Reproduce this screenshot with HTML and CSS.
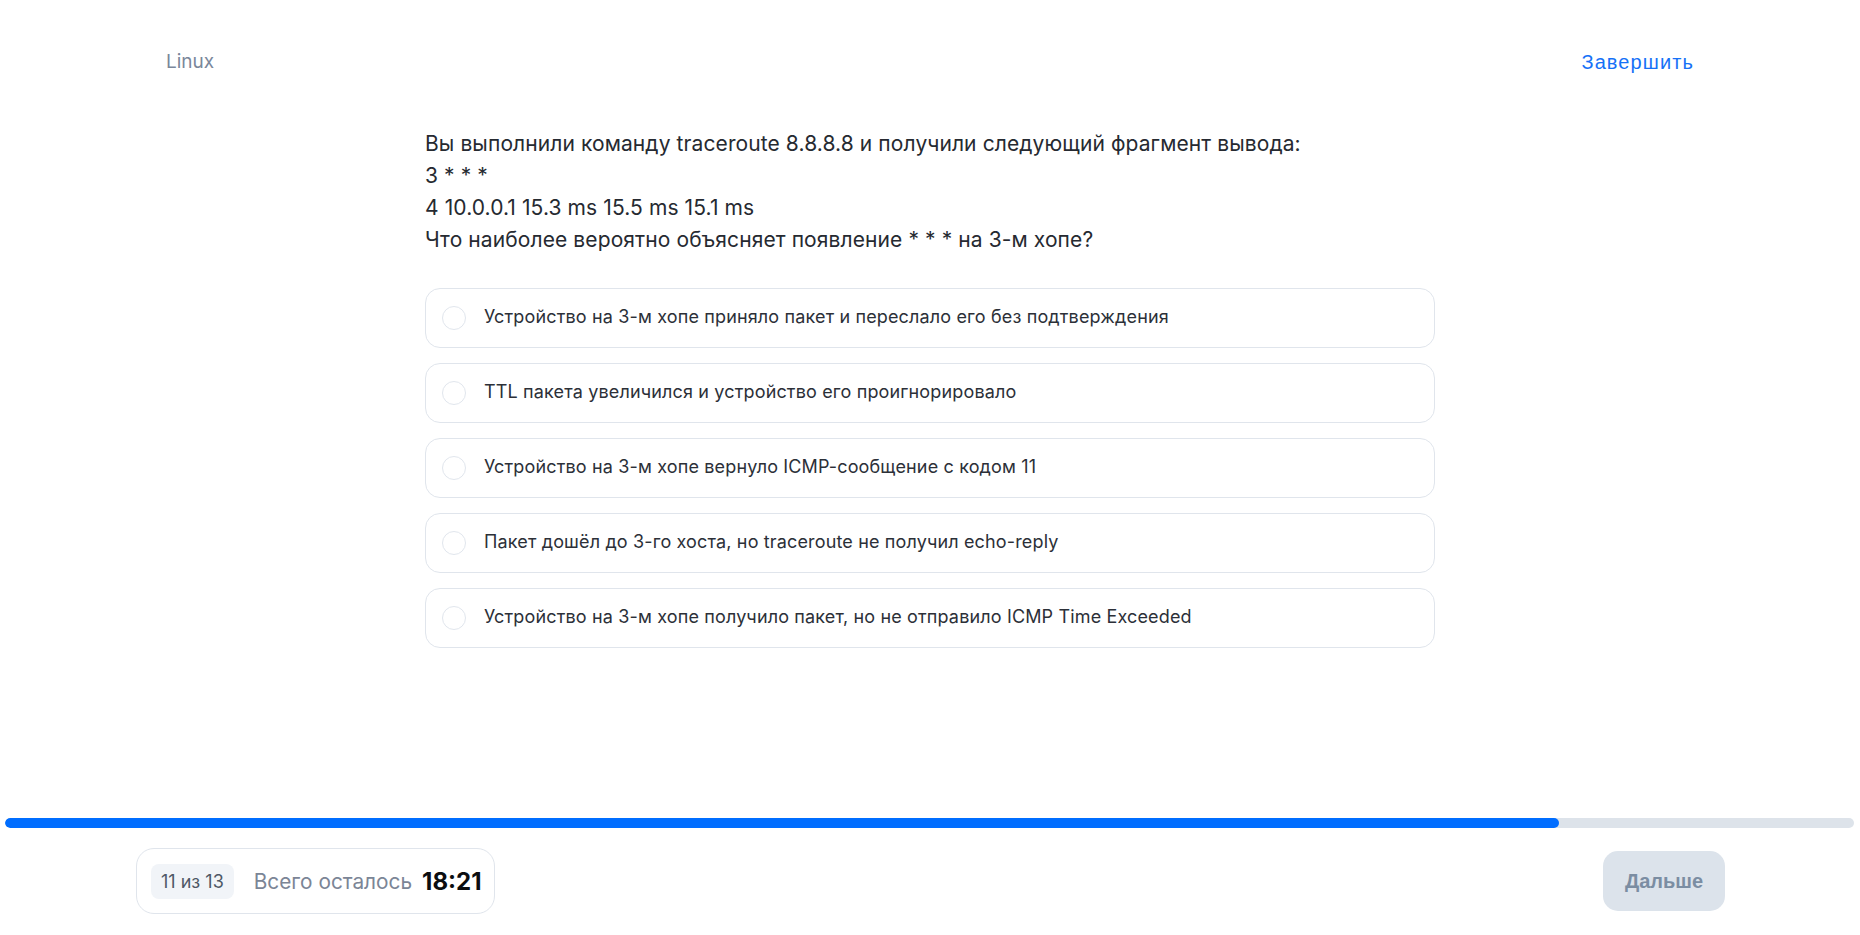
FILE: index.html
```html
<!DOCTYPE html>
<html lang="ru">
<head>
<meta charset="utf-8">
<title>Linux — тест</title>
<link rel="stylesheet" href="styles.css">
</head>
<body>
<div class="page">
  <header class="header">
    <span class="topic">Linux</span>
    <a class="finish" href="#">Завершить</a>
  </header>
  <main class="main">
    <div class="question">
      <p>Вы выполнили команду traceroute 8.8.8.8 и получили следующий фрагмент вывода:</p>
      <p>3 * * *</p>
      <p>4 10.0.0.1 15.3 ms 15.5 ms 15.1 ms</p>
      <p>Что наиболее вероятно объясняет появление * * * на 3-м хопе?</p>
    </div>
    <ul class="options">
      <li class="option"><span class="radio"></span><span class="label">Устройство на 3-м хопе приняло пакет и переслало его без подтверждения</span></li>
      <li class="option"><span class="radio"></span><span class="label">TTL пакета увеличился и устройство его проигнорировало</span></li>
      <li class="option"><span class="radio"></span><span class="label">Устройство на 3-м хопе вернуло ICMP-сообщение с кодом 11</span></li>
      <li class="option"><span class="radio"></span><span class="label">Пакет дошёл до 3-го хоста, но traceroute не получил echo-reply</span></li>
      <li class="option"><span class="radio"></span><span class="label">Устройство на 3-м хопе получило пакет, но не отправило ICMP Time Exceeded</span></li>
    </ul>
  </main>
  <footer class="footer">
    <div class="progress"><div class="progress-fill" style="width: 84.05%"></div></div>
    <div class="footer-row">
      <div class="status">
        <span class="counter">11 из 13</span>
        <span class="remaining">Всего осталось</span>
        <span class="timer">18:21</span>
      </div>
      <button class="next" type="button">Дальше</button>
    </div>
  </footer>
</div>
</body>
</html>
```

FILE: styles.css
```css
* { box-sizing: border-box; }

html, body {
  margin: 0;
  padding: 0;
  background: #ffffff;
}

body {
  font-family: Inter, "Noto Sans", sans-serif;
  color: #272b33;
}

.page {
  height: 100vh;
  display: flex;
  flex-direction: column;
}

.header {
  width: 1528px;
  margin: 0 auto;
  padding-top: 50px;
  display: flex;
  justify-content: space-between;
  align-items: center;
  line-height: 24px;
}

.topic {
  font-size: 19px;
  color: #7a879b;
}

.finish {
  font-family: "Liberation Sans", Arial, sans-serif;
  font-size: 20px;
  letter-spacing: 1.1px;
  color: #1671f7;
  text-decoration: none;
}

.main {
  flex: 1;
  width: 1010px;
  margin: 0 auto;
  padding-top: 54px;
}

.question p {
  margin: 0;
  font-size: 21px;
  letter-spacing: 0.1px;
  line-height: 32px;
  color: #262a31;
}

.options {
  list-style: none;
  margin: 32px 0 0;
  padding: 0;
  display: flex;
  flex-direction: column;
  gap: 15px;
}

.option {
  height: 60px;
  border: 1px solid #e0e5ec;
  border-radius: 15px;
  padding: 0 16px;
  display: flex;
  align-items: center;
  gap: 18px;
}

.radio {
  width: 24px;
  height: 24px;
  flex: none;
  border: 1.5px solid #e1e6ed;
  border-radius: 50%;
}

.label {
  font-size: 18px;
  letter-spacing: 0.15px;
  padding-bottom: 3px;
  color: #2c3038;
}

.footer {
  display: flex;
  flex-direction: column;
}

.progress {
  height: 10px;
  margin: 0 6px 0 5px;
  background: #dde3ea;
  border-radius: 5px;
  overflow: hidden;
}

.progress-fill {
  height: 100%;
  background: #006dff;
  border-radius: 5px;
}

.footer-row {
  display: flex;
  justify-content: space-between;
  align-items: center;
  padding: 20px 135px 21px 136px;
}

.status {
  height: 66px;
  border: 1px solid #e0e5ec;
  border-radius: 18px;
  padding: 0 12px 0 14px;
  display: flex;
  align-items: center;
}

.counter {
  height: 35px;
  padding: 0 10px;
  display: flex;
  align-items: center;
  background: #f1f4f8;
  border-radius: 8px;
  font-size: 18px;
  color: #4e5866;
}

.remaining {
  margin-left: 20px;
  font-size: 20.8px;
  color: #7b8596;
}

.timer {
  margin-left: 10px;
  font-size: 24px;
  font-weight: 700;
  color: #0b0d10;
}

.next {
  width: 122px;
  height: 60px;
  border: none;
  border-radius: 15px;
  background: #dce3eb;
  font-family: "Liberation Sans", Arial, sans-serif;
  font-size: 20px;
  font-weight: 700;
  color: #7b8da2;
}
```
